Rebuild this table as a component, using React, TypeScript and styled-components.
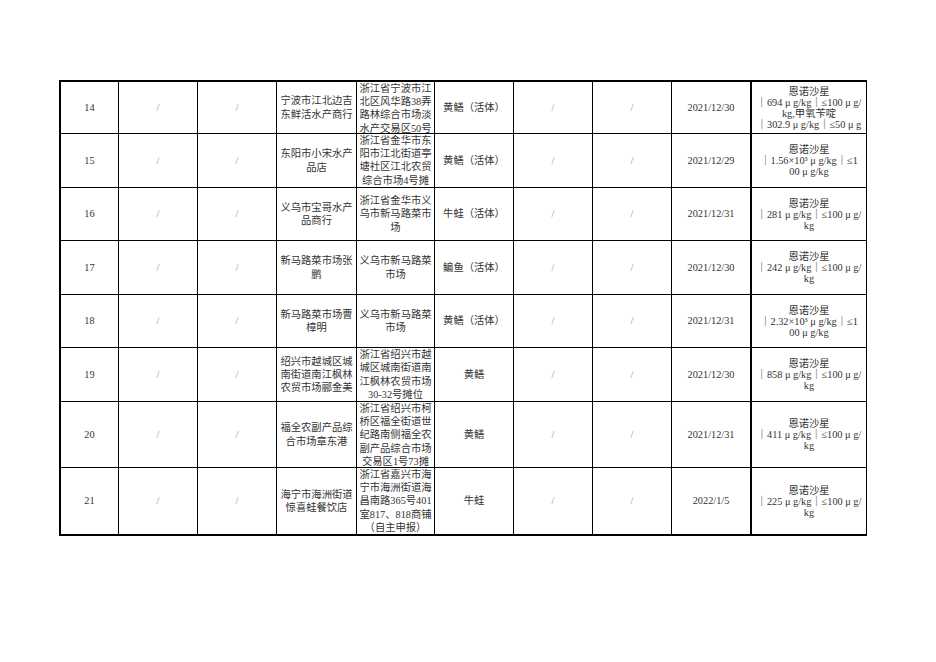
import React from "react";
import styled, { createGlobalStyle } from "styled-components";

const GlobalStyle = createGlobalStyle`
  html, body {
    margin: 0;
    padding: 0;
    background: #ffffff;
  }
  body {
    font-family: "Liberation Serif", "Noto Sans CJK SC", serif;
  }
`;

const Page = styled.div`
  width: 936px;
  height: 662px;
  box-sizing: border-box;
  padding: 80px 0 0 59px;
  background: #fff;
`;

const Grid = styled.div`
  display: grid;
  width: max-content;
  grid-template-columns: 57px 78px 78px 79px 77px 78px 78px 78px 78px 115px;
  grid-template-rows: 51px 53px 52px 53px 52px 53px 65px 66px;
  gap: 1px;
  background: #000;
  border-style: solid;
  border-color: #000;
  border-width: 2px 1px 2px 2px;
`;

const Cell = styled.div<{ $tight?: boolean; $muted?: boolean; $thickLeft?: boolean }>`
  background: #fff;
  display: flex;
  flex-direction: column;
  justify-content: safe center;
  align-items: safe center;
  text-align: center;
  overflow: hidden;
  box-sizing: border-box;
  font-family: "Liberation Serif", "Noto Sans CJK SC", serif;
  font-size: 10.3px;
  line-height: ${(p) => (p.$tight ? "11px" : "13.2px")};
  color: ${(p) => (p.$muted ? "#8a8a8a" : "#333333")};
  border-left: ${(p) => (p.$thickLeft ? "1px solid #000" : "none")};
`;

const Line = styled.span`
  display: block;
  white-space: nowrap;
`;

type Row = {
  no: string;
  name: string[];
  addr: string[];
  item: string;
  date: string;
  result: string[];
};

const rows: Row[] = [
  {
    no: "14",
    name: ["宁波市江北边吉", "东鲜活水产商行"],
    addr: ["浙江省宁波市江", "北区风华路38弄", "路林综合市场淡", "水产交易区50号"],
    item: "黄鳝（活体）",
    date: "2021/12/30",
    result: ["恩诺沙星", "｜694 μ g/kg｜≤100 μ g/", "kg,甲氧苄啶", "｜302.9 μ g/kg｜≤50 μ g"],
  },
  {
    no: "15",
    name: ["东阳市小宋水产", "品店"],
    addr: ["浙江省金华市东", "阳市江北街道亭", "塘社区江北农贸", "综合市场4号摊", "位"],
    item: "黄鳝（活体）",
    date: "2021/12/29",
    result: ["恩诺沙星", "｜1.56×10³ μ g/kg｜≤1", "00 μ g/kg"],
  },
  {
    no: "16",
    name: ["义乌市宝哥水产", "品商行"],
    addr: ["浙江省金华市义", "乌市新马路菜市", "场"],
    item: "牛蛙（活体）",
    date: "2021/12/31",
    result: ["恩诺沙星", "｜281 μ g/kg｜≤100 μ g/", "kg"],
  },
  {
    no: "17",
    name: ["新马路菜市场张", "鹏"],
    addr: ["义乌市新马路菜", "市场"],
    item: "鳊鱼（活体）",
    date: "2021/12/30",
    result: ["恩诺沙星", "｜242 μ g/kg｜≤100 μ g/", "kg"],
  },
  {
    no: "18",
    name: ["新马路菜市场曹", "樟明"],
    addr: ["义乌市新马路菜", "市场"],
    item: "黄鳝（活体）",
    date: "2021/12/31",
    result: ["恩诺沙星", "｜2.32×10³ μ g/kg｜≤1", "00 μ g/kg"],
  },
  {
    no: "19",
    name: ["绍兴市越城区城", "南街道南江枫林", "农贸市场郦金美"],
    addr: ["浙江省绍兴市越", "城区城南街道南", "江枫林农贸市场", "30-32号摊位"],
    item: "黄鳝",
    date: "2021/12/30",
    result: ["恩诺沙星", "｜858 μ g/kg｜≤100 μ g/", "kg"],
  },
  {
    no: "20",
    name: ["福全农副产品综", "合市场章东港"],
    addr: ["浙江省绍兴市柯", "桥区福全街道世", "纪路南侧福全农", "副产品综合市场", "交易区1号73摊", "位"],
    item: "黄鳝",
    date: "2021/12/31",
    result: ["恩诺沙星", "｜411 μ g/kg｜≤100 μ g/", "kg"],
  },
  {
    no: "21",
    name: ["海宁市海洲街道", "惊喜蛙餐饮店"],
    addr: ["浙江省嘉兴市海", "宁市海洲街道海", "昌南路365号401", "室817、818商铺", "（自主申报）"],
    item: "牛蛙",
    date: "2022/1/5",
    result: ["恩诺沙星", "｜225 μ g/kg｜≤100 μ g/", "kg"],
  },
];

const Lines: React.FC<{ lines: string[] }> = ({ lines }) => (
  <>
    {lines.map((l, i) => (
      <Line key={i}>{l}</Line>
    ))}
  </>
);

export default function App() {
  return (
    <>
      <GlobalStyle />
      <Page>
        <Grid>
          {rows.map((r) => (
            <React.Fragment key={r.no}>
              <Cell>{r.no}</Cell>
              <Cell $muted>/</Cell>
              <Cell $muted>/</Cell>
              <Cell>
                <Lines lines={r.name} />
              </Cell>
              <Cell>
                <Lines lines={r.addr} />
              </Cell>
              <Cell>{r.item}</Cell>
              <Cell $muted>/</Cell>
              <Cell $muted>/</Cell>
              <Cell>{r.date}</Cell>
              <Cell $tight $thickLeft>
                <Lines lines={r.result} />
              </Cell>
            </React.Fragment>
          ))}
        </Grid>
      </Page>
    </>
  );
}
